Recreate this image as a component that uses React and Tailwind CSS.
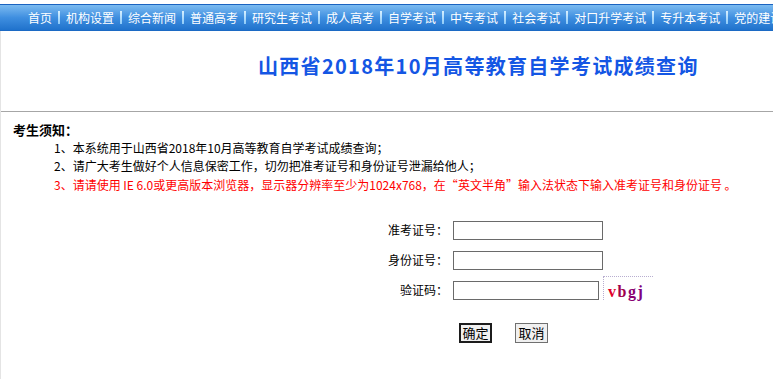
import React from "react";

const navItems = [
  "首页",
  "机构设置",
  "综合新闻",
  "普通高考",
  "研究生考试",
  "成人高考",
  "自学考试",
  "中专考试",
  "社会考试",
  "对口升学考试",
  "专升本考试",
  "党的建设",
];

const cjk = { fontFamily: '"Noto Sans CJK SC", "Noto Sans", sans-serif' };

function Nav() {
  return (
    <div className="h-[27px] shrink-0 border-t border-t-[#1b63c0] border-b border-b-[#1c6ac4] bg-gradient-to-b from-[#7bbbf0] via-[#3f8fe0] to-[#1f72cc] flex items-center pl-[22px] overflow-hidden whitespace-nowrap">
      {navItems.map((t, i) => (
        <React.Fragment key={t}>
          {i > 0 && (
            <span className="w-[2px] h-[13px] bg-gradient-to-b from-[#d8f0ff] to-[#8ccaf8] shrink-0" />
          )}
          <span className="px-[6px] text-[12px] leading-[14px] text-white shrink-0">
            {t}
          </span>
        </React.Fragment>
      ))}
    </div>
  );
}

function Row({ label, children }) {
  return (
    <div className="flex items-center h-[30px]">
      <div className="w-[80px] text-right text-[12px] text-black">{label}</div>
      <div className="ml-[5px] flex items-center">{children}</div>
    </div>
  );
}

export default function App() {
  return (
    <div className="w-[773px] h-[379px] bg-white overflow-hidden flex flex-col" style={cjk}>
      <div className="h-[4px] shrink-0" />
      <Nav />
      <div className="flex-1 border-l border-l-[#e4e4e4]">
        <div className="h-[80px] pl-[257px] pt-[23px]">
          <div className="text-[20px] leading-[24px] font-bold text-[#1456e4] tracking-[1.3px] whitespace-nowrap">
            山西省2018年10月高等教育自学考试成绩查询
          </div>
        </div>
        <div className="border-t border-t-[#a6a6a6]" />
        <div className="pt-[9px] text-[12px] leading-[18px]">
          <div className="pl-[12px] font-bold text-black text-[13px]">考生须知：</div>
          <div className="pl-[53px] text-black">1、本系统用于山西省2018年10月高等教育自学考试成绩查询；</div>
          <div className="pl-[53px] text-black">2、请广大考生做好个人信息保密工作，切勿把准考证号和身份证号泄漏给他人；</div>
          <div className="pl-[53px] text-[#ff0000] leading-[20px] whitespace-nowrap">
            3、请请使用 IE 6.0或更高版本浏览器，显示器分辨率至少为1024x768，在“英文半角”输入法状态下输入准考证号和身份证号 。
          </div>
        </div>
        <div className="pl-[367px] pt-[20px]">
          <Row label="准考证号：">
            <input className="w-[150px] h-[19px] border border-[#6a6a6a] outline-none bg-white" />
          </Row>
          <Row label="身份证号：">
            <input className="w-[150px] h-[19px] border border-[#6a6a6a] outline-none bg-white" />
          </Row>
          <Row label="验证码：">
            <input className="w-[146px] h-[19px] border border-[#6a6a6a] outline-none bg-white" />
            <div className="ml-[4px] -mt-[4px] w-[50px] h-[24px] border-t border-l border-dotted border-[#b8aed0] pl-[4px] pt-[1px]">
              <span
                className="text-[16px] leading-[20px] font-bold tracking-[1.5px]"
                style={{ fontFamily: '"Liberation Serif", serif' }}
              >
                <span className="text-[#e0002a]">v</span>
                <span className="text-[#a0004c]">b</span>
                <span className="text-[#8a0070]">g</span>
                <span className="text-[#800080]">j</span>
              </span>
            </div>
          </Row>
          <div className="flex pl-[91px] pt-[18px] gap-[23px]">
            <button className="w-[33px] h-[20px] border-2 border-[#1c1c1c] bg-[#f0f0f0] text-[13px] leading-[14px] text-black p-0">
              确定
            </button>
            <button className="w-[33px] h-[20px] border border-[#707070] bg-[#f0f0f0] text-[13px] leading-[14px] text-black p-0">
              取消
            </button>
          </div>
        </div>
      </div>
    </div>
  );
}
